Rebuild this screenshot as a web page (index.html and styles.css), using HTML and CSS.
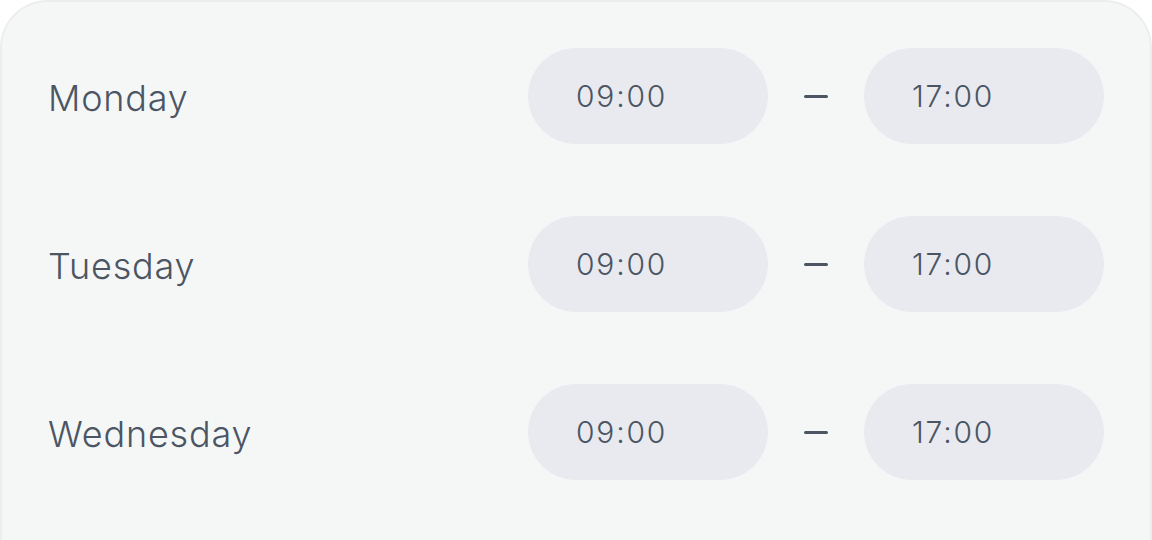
FILE: index.html
```html
<!DOCTYPE html>
<html lang="en">
<head>
<meta charset="utf-8">
<title>Schedule</title>
<link rel="stylesheet" href="styles.css">
</head>
<body>
<div class="card">
  <div class="row">
    <span class="day">Monday</span>
    <div class="times">
      <span class="pill">09:00</span>
      <span class="dash"></span>
      <span class="pill">17:00</span>
    </div>
  </div>
  <div class="row">
    <span class="day">Tuesday</span>
    <div class="times">
      <span class="pill">09:00</span>
      <span class="dash"></span>
      <span class="pill">17:00</span>
    </div>
  </div>
  <div class="row">
    <span class="day">Wednesday</span>
    <div class="times">
      <span class="pill">09:00</span>
      <span class="dash"></span>
      <span class="pill">17:00</span>
    </div>
  </div>
</div>
</body>
</html>
```
FILE: styles.css
```css
html, body {
  margin: 0;
  padding: 0;
  background: #ffffff;
}
body {
  font-family: Inter, "Noto Sans", sans-serif;
  width: 1152px;
  height: 540px;
  overflow: hidden;
}
.card {
  box-sizing: border-box;
  width: 1152px;
  min-height: 620px;
  background: #f5f7f7;
  border: 2px solid #eceeee;
  border-radius: 48px;
  padding: 46px 46px;
  display: flex;
  flex-direction: column;
  gap: 72px;
}
.row {
  display: flex;
  align-items: center;
  justify-content: space-between;
  height: 96px;
}
.day {
  font-size: 36px;
  font-weight: 300;
  letter-spacing: 0.8px;
  color: #4b5563;
  padding-top: 4px;
}
.times {
  display: flex;
  align-items: center;
  gap: 36px;
}
.pill {
  box-sizing: border-box;
  width: 240px;
  height: 96px;
  border-radius: 48px;
  background: #e8eaef;
  padding-left: 48px;
  display: flex;
  align-items: center;
  font-size: 30px;
  font-weight: 300;
  letter-spacing: 1.8px;
  color: #4b5563;
  font-variant-numeric: proportional-nums;
}
.dash {
  width: 24px;
  height: 3px;
  border-radius: 2px;
  background: #4b5563;
}
```
